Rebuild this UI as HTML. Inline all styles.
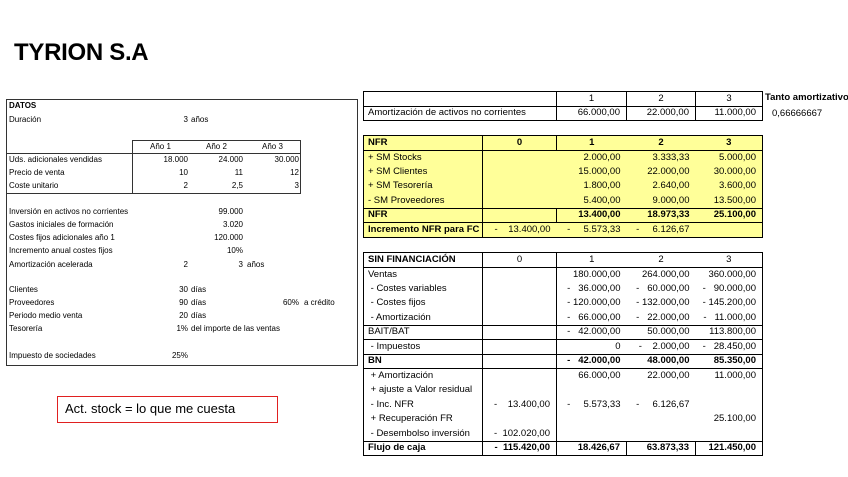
<!DOCTYPE html>
<html><head><meta charset="utf-8"><style>
*{margin:0;padding:0;box-sizing:border-box}
body{width:848px;height:477px;background:#fff;position:relative;overflow:hidden;font-family:"Liberation Sans",sans-serif;color:#000}
.t{position:absolute;font-size:8px;white-space:nowrap;line-height:10px}
.r{text-align:right}
table{position:absolute;border-collapse:collapse;table-layout:fixed;font-size:9.5px}
td{height:14.5px;padding:0 4px;white-space:nowrap;line-height:12px;overflow:hidden}
td.n{text-align:right;padding-right:6px}
td.c{text-align:center}
.y td{background:#FFFF99}
.b{font-weight:bold}
.bt{border-top:1px solid #000}
.bb{border-bottom:1px solid #000}
.bl{border-left:1px solid #000}
.br{border-right:1px solid #000}
.ob{border:1.5px solid #000}
</style></head><body>
<div style="position:absolute;left:14px;top:39px;font-size:24px;font-weight:bold;letter-spacing:-0.3px">TYRION S.A</div>

<div style="position:absolute;left:6px;top:99px;width:352px;height:267px;border:1px solid #333"></div>
<div style="position:absolute;left:132px;top:140px;width:169px;height:54px;border:1px solid #333"></div>
<div style="position:absolute;left:6px;top:153px;width:126px;border-top:1px solid #333"></div>
<div style="position:absolute;left:6px;top:193px;width:126px;border-top:1px solid #333"></div>
<div style="position:absolute;left:132px;top:153px;width:169px;border-top:1px solid #333"></div>

<div class="t b" style="left:9px;top:101px">DATOS</div>
<div class="t" style="left:9px;top:115px">Duración</div>
<div class="t r" style="left:150px;width:38px;top:115px">3</div><div class="t" style="left:191px;top:115px">años</div>
<div class="t" style="left:150px;top:142px">Año 1</div>
<div class="t" style="left:206px;top:142px">Año 2</div>
<div class="t" style="left:262px;top:142px">Año 3</div>
<div class="t" style="left:9px;top:155px">Uds. adicionales vendidas</div>
<div class="t" style="left:9px;top:168px">Precio de venta</div>
<div class="t" style="left:9px;top:181px">Coste unitario</div>
<div class="t r" style="left:140px;width:48px;top:155px">18.000</div>
<div class="t r" style="left:195px;width:48px;top:155px">24.000</div>
<div class="t r" style="left:250px;width:49px;top:155px">30.000</div>
<div class="t r" style="left:140px;width:48px;top:168px">10</div>
<div class="t r" style="left:195px;width:48px;top:168px">11</div>
<div class="t r" style="left:250px;width:49px;top:168px">12</div>
<div class="t r" style="left:140px;width:48px;top:181px">2</div>
<div class="t r" style="left:195px;width:48px;top:181px">2,5</div>
<div class="t r" style="left:250px;width:49px;top:181px">3</div>
<div class="t" style="left:9px;top:207px">Inversión en activos no corrientes</div>
<div class="t" style="left:9px;top:220px">Gastos iniciales de formación</div>
<div class="t" style="left:9px;top:233px">Costes fijos adicionales año 1</div>
<div class="t" style="left:9px;top:246px">Incremento anual costes fijos</div>
<div class="t" style="left:9px;top:260px">Amortización acelerada</div>
<div class="t r" style="left:195px;width:48px;top:207px">99.000</div>
<div class="t r" style="left:195px;width:48px;top:220px">3.020</div>
<div class="t r" style="left:195px;width:48px;top:233px">120.000</div>
<div class="t r" style="left:195px;width:48px;top:246px">10%</div>
<div class="t r" style="left:150px;width:38px;top:260px">2</div>
<div class="t r" style="left:195px;width:48px;top:260px">3</div><div class="t" style="left:247px;top:260px">años</div>
<div class="t" style="left:9px;top:285px">Clientes</div>
<div class="t" style="left:9px;top:298px">Proveedores</div>
<div class="t" style="left:9px;top:311px">Periodo medio venta</div>
<div class="t" style="left:9px;top:324px">Tesorería</div>
<div class="t r" style="left:150px;width:38px;top:285px">30</div><div class="t" style="left:191px;top:285px">días</div>
<div class="t r" style="left:150px;width:38px;top:298px">90</div><div class="t" style="left:191px;top:298px">días</div>
<div class="t r" style="left:250px;width:49px;top:298px">60%</div><div class="t" style="left:304px;top:298px">a crédito</div>
<div class="t r" style="left:150px;width:38px;top:311px">20</div><div class="t" style="left:191px;top:311px">días</div>
<div class="t r" style="left:150px;width:38px;top:324px">1%</div><div class="t" style="left:191px;top:324px">del importe de las ventas</div>
<div class="t" style="left:9px;top:351px">Impuesto de sociedades</div>
<div class="t r" style="left:140px;width:48px;top:351px">25%</div>

<div style="position:absolute;left:57px;top:396px;width:221px;height:27px;border:1.5px solid #e02020;font-size:13px;padding:4px 0 0 7px">Act. stock = lo que me cuesta</div>

<table style="left:363px;top:91px;width:399px" class="ob">
<colgroup><col style="width:193px"><col style="width:70px"><col style="width:69px"><col style="width:67px"></colgroup>
<tr><td class="br bb"></td><td class="c br bb">1</td><td class="c br bb">2</td><td class="c bb">3</td></tr>
<tr><td class="br">Amortización de activos no corrientes</td><td class="n br">66.000,00</td><td class="n br">22.000,00</td><td class="n">11.000,00</td></tr>
</table>
<div class="t b" style="left:765px;top:93px;font-size:9.5px">Tanto amortizativo</div>
<div class="t" style="left:772px;top:109px;font-size:9.5px">0,66666667</div>

<table style="left:363px;top:135px;width:399px" class="ob">
<colgroup><col style="width:119px"><col style="width:74px"><col style="width:70px"><col style="width:69px"><col style="width:67px"></colgroup>
<tr class="y b"><td class="br bb">NFR</td><td class="c br bb">0</td><td class="c bb">1</td><td class="c bb">2</td><td class="c bb">3</td></tr>
<tr class="y"><td class="br">+ SM Stocks</td><td></td><td class="n">2.000,00</td><td class="n">3.333,33</td><td class="n">5.000,00</td></tr>
<tr class="y"><td class="br">+ SM Clientes</td><td></td><td class="n">15.000,00</td><td class="n">22.000,00</td><td class="n">30.000,00</td></tr>
<tr class="y"><td class="br">+ SM Tesorería</td><td></td><td class="n">1.800,00</td><td class="n">2.640,00</td><td class="n">3.600,00</td></tr>
<tr class="y"><td class="br">- SM Proveedores</td><td></td><td class="n">5.400,00</td><td class="n">9.000,00</td><td class="n">13.500,00</td></tr>
<tr class="y b"><td class="br bt bb">NFR</td><td class="bt bb br"></td><td class="n bt bb">13.400,00</td><td class="n bt bb">18.973,33</td><td class="n bt bb">25.100,00</td></tr>
<tr class="y b"><td class="br">Incremento NFR para FC</td><td class="n" style="font-weight:normal">-&nbsp;&nbsp;&nbsp;&nbsp;13.400,00</td><td class="n" style="font-weight:normal">-&nbsp;&nbsp;&nbsp;&nbsp;&nbsp;5.573,33</td><td class="n" style="font-weight:normal">-&nbsp;&nbsp;&nbsp;&nbsp;&nbsp;6.126,67</td><td></td></tr>
</table>

<table style="left:363px;top:252px;width:399px" class="ob">
<colgroup><col style="width:119px"><col style="width:74px"><col style="width:70px"><col style="width:69px"><col style="width:67px"></colgroup>
<tr class="b"><td class="br bb">SIN FINANCIACIÓN</td><td class="c br bb" style="font-weight:normal">0</td><td class="c bb" style="font-weight:normal">1</td><td class="c bb" style="font-weight:normal">2</td><td class="c bb" style="font-weight:normal">3</td></tr>
<tr><td class="br">Ventas</td><td class="br"></td><td class="n">180.000,00</td><td class="n">264.000,00</td><td class="n">360.000,00</td></tr>
<tr><td class="br">&nbsp;- Costes variables</td><td class="br"></td><td class="n">-&nbsp;&nbsp;&nbsp;36.000,00</td><td class="n">-&nbsp;&nbsp;&nbsp;60.000,00</td><td class="n">-&nbsp;&nbsp;&nbsp;90.000,00</td></tr>
<tr><td class="br">&nbsp;- Costes fijos</td><td class="br"></td><td class="n">- 120.000,00</td><td class="n">- 132.000,00</td><td class="n">- 145.200,00</td></tr>
<tr><td class="br">&nbsp;- Amortización</td><td class="br"></td><td class="n">-&nbsp;&nbsp;&nbsp;66.000,00</td><td class="n">-&nbsp;&nbsp;&nbsp;22.000,00</td><td class="n">-&nbsp;&nbsp;&nbsp;11.000,00</td></tr>
<tr><td class="br bt bb">BAIT/BAT</td><td class="br bt bb"></td><td class="n bt bb">-&nbsp;&nbsp;&nbsp;42.000,00</td><td class="n bt bb">50.000,00</td><td class="n bt bb">113.800,00</td></tr>
<tr><td class="br bb">&nbsp;- Impuestos</td><td class="br bb"></td><td class="n bb">0</td><td class="n bb">-&nbsp;&nbsp;&nbsp;&nbsp;2.000,00</td><td class="n bb">-&nbsp;&nbsp;&nbsp;28.450,00</td></tr>
<tr class="b"><td class="br bb">BN</td><td class="br bb"></td><td class="n bb">-&nbsp;&nbsp;&nbsp;42.000,00</td><td class="n bb">48.000,00</td><td class="n bb">85.350,00</td></tr>
<tr><td class="br">&nbsp;+ Amortización</td><td class="br"></td><td class="n">66.000,00</td><td class="n">22.000,00</td><td class="n">11.000,00</td></tr>
<tr><td class="br">&nbsp;+ ajuste a Valor residual</td><td class="br"></td><td></td><td></td><td></td></tr>
<tr><td class="br">&nbsp;- Inc. NFR</td><td class="n br">-&nbsp;&nbsp;&nbsp;&nbsp;13.400,00</td><td class="n">-&nbsp;&nbsp;&nbsp;&nbsp;&nbsp;5.573,33</td><td class="n">-&nbsp;&nbsp;&nbsp;&nbsp;&nbsp;6.126,67</td><td></td></tr>
<tr><td class="br">&nbsp;+ Recuperación FR</td><td class="br"></td><td></td><td></td><td class="n">25.100,00</td></tr>
<tr><td class="br">&nbsp;- Desembolso inversión</td><td class="n br">-&nbsp;&nbsp;102.020,00</td><td></td><td></td><td></td></tr>
<tr class="b"><td class="br bt">Flujo de caja</td><td class="n br bt">-&nbsp;&nbsp;115.420,00</td><td class="n br bt">18.426,67</td><td class="n br bt">63.873,33</td><td class="n bt">121.450,00</td></tr>
</table>
</body></html>
